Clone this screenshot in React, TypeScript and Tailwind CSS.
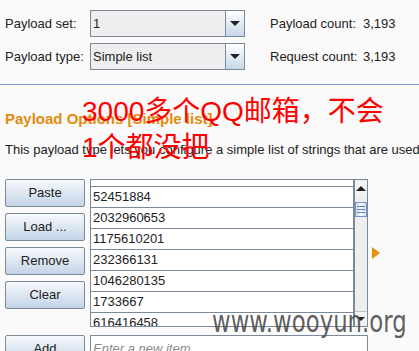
import React from 'react';

function Combo({ value }: { value: string }) {
  return (
    <div className="flex h-[27px] w-[155px] border border-[#7a8a99] bg-[#eeeeee]">
      <div className="flex flex-1 items-center px-[2px]">{value}</div>
      <div className="flex w-[19px] items-center justify-center border-l border-[#7a8a99] bg-gradient-to-b from-white to-[#c6d7ea]">
        <div className="h-0 w-0 border-x-[5px] border-t-[5px] border-x-transparent border-t-[#222]" />
      </div>
    </div>
  );
}

function Btn({ label }: { label: string }) {
  return (
    <div className="flex h-[28px] w-[80px] shrink-0 items-center justify-center rounded-[2px] border border-[#7a8a99] bg-gradient-to-b from-[#f7f9fc] to-[#c3d4e7] text-[#222]">
      {label}
    </div>
  );
}

export default function App() {
  const items = [
    '783000000',
    '52451884',
    '2032960653',
    '1175610201',
    '232366131',
    '1046280135',
    '1733667',
    '616416458',
    '1234567',
  ];

  return (
    <div className="relative h-[351px] w-[419px] overflow-hidden bg-[#fafafa] font-['Liberation_Sans',Arial,sans-serif] text-[13px] text-[#222]">
      <div className="flex flex-col gap-[6px] px-[5px] pt-[10px]">
        <div className="flex h-[27px] items-center">
          <span className="w-[85px]">Payload set:</span>
          <Combo value="1" />
          <span className="ml-[25px] w-[93px]">Payload count:</span>
          <span>3,193</span>
        </div>
        <div className="flex h-[27px] items-center">
          <span className="w-[85px]">Payload type:</span>
          <Combo value="Simple list" />
          <span className="ml-[25px] w-[93px]">Request count:</span>
          <span>3,193</span>
        </div>
      </div>

      <div className="mt-[14px] h-px bg-[#7b96cf]" />

      <div className="mt-[25px] px-[5px] text-[15px] font-bold leading-[18px] text-[#e58a0c]">
        Payload Options [Simple list]
      </div>
      <div className="mt-[14px] whitespace-nowrap px-[5px] leading-[16px]">
        This payload type lets you configure a simple list of strings that are used as payloads.
      </div>

      <div className="mt-[21px] flex gap-[5px] px-[5px]">
        <div className="flex flex-col gap-[6px]">
          <Btn label="Paste" />
          <Btn label="Load ..." />
          <Btn label="Remove" />
          <Btn label="Clear" />
        </div>
        <div className="flex h-[148px] w-[278px] border-y border-l border-[#7a8a99]">
          <div className="flex-1 overflow-hidden bg-white">
            <div className="-mt-[14px]">
              {items.map((v) => (
                <div
                  key={v}
                  className="h-[21px] border-b border-[#7a8a99] px-[2px] leading-[20px]"
                >
                  {v}
                </div>
              ))}
            </div>
          </div>
          <div className="flex w-[15px] flex-col border-l-2 border-r border-[#7a8a99] bg-[#eeeeee]">
            <div className="mt-[1px] flex h-[15px] items-center justify-center bg-[#f3f3f3]">
              <div className="h-0 w-0 border-x-[5px] border-b-[5px] border-x-transparent border-b-[#222]" />
            </div>
            <div className="mt-[6px] flex h-[15px] flex-col items-center justify-center gap-[2px] border border-[#7a96c8] bg-gradient-to-r from-[#c9d8ef] via-white to-[#c9d8ef]">
              <div className="h-px w-[8px] bg-[#5f7fbf]" />
              <div className="h-px w-[8px] bg-[#5f7fbf]" />
              <div className="h-px w-[8px] bg-[#5f7fbf]" />
            </div>
            <div className="flex-1" />
            <div className="flex h-[15px] items-center justify-center border-t border-[#b8c0c8] bg-[#f3f3f3]">
              <div className="h-0 w-0 border-x-[4px] border-t-[4px] border-x-transparent border-t-[#222]" />
            </div>
          </div>
        </div>
        <div className="ml-[-1px] mt-[68px] h-0 w-0 self-start border-y-[6px] border-l-[8px] border-y-transparent border-l-[#e8900c]" />
      </div>

      <div className="mt-[8px] flex gap-[5px] px-[5px]">
        <Btn label="Add" />
        <div className="flex h-[28px] w-[278px] items-center border border-[#7a8a99] bg-white px-[2px] italic text-[#8a8a8a]">
          Enter a new item
        </div>
      </div>

      <div className="absolute left-[82px] top-[94px] whitespace-nowrap font-['Liberation_Sans','Noto_Sans_CJK_SC',sans-serif] text-[28px] leading-[36px] text-[#ff0000]">
        <div>3000多个QQ邮箱，不会</div>
        <div>1个都没把</div>
      </div>

      <div className="absolute left-[212px] top-[307px] origin-left scale-x-[0.76] whitespace-nowrap font-['DejaVu_Sans',sans-serif] text-[30px] leading-[30px] text-[#4a4a4a]/90">
        www.wooyun.org
      </div>
    </div>
  );
}
